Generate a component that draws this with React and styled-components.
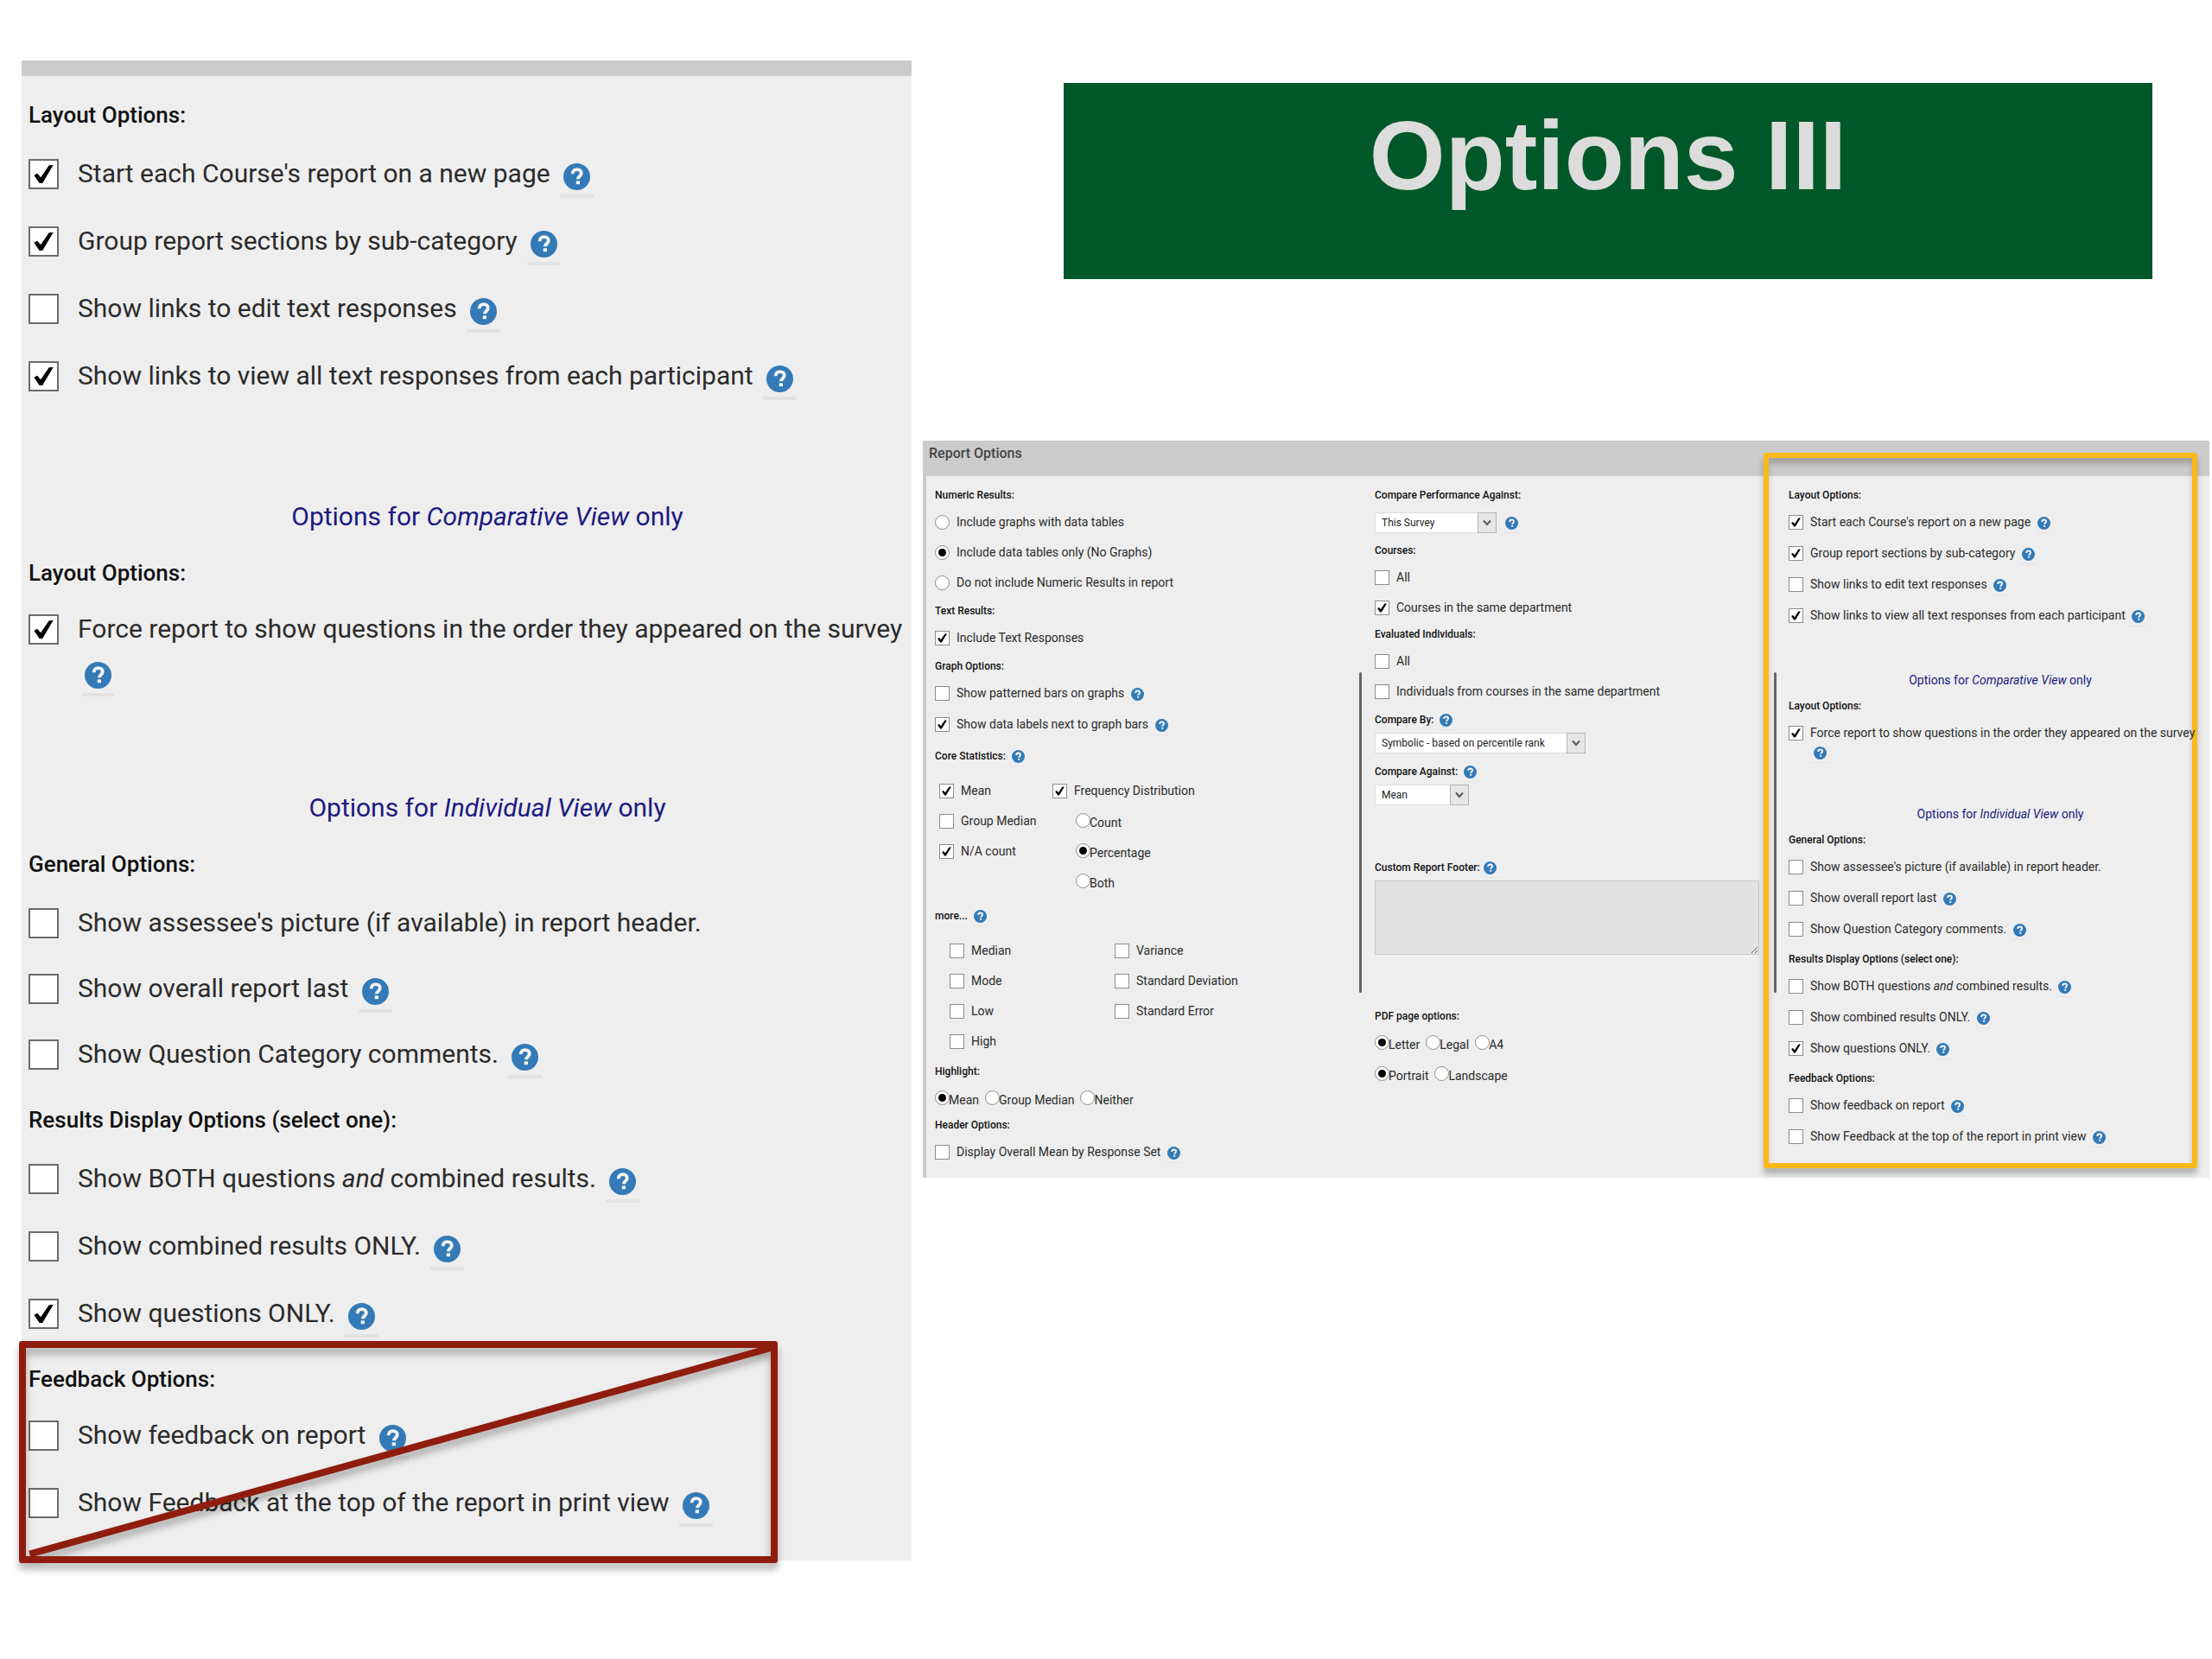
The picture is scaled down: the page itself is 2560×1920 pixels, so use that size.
import React, { useId } from 'react'
import styled, { createGlobalStyle, css, ThemeProvider } from 'styled-components'

const large = {
  font: 30,
  headingFont: 26,
  heading: 36,
  line: 50,
  box: 35,
  boxTop: 8,
  boxBorder: 2,
  boxColor: '#6b6b6b',
  boxGap: 22,
  icon: 31,
  iconPad: 4,
  iconTop: 12,
  iconDrop: 5,
  underline: 4,
  noteIndent: 40,
  headGap: 25,
  headGapTight: 22,
  rowGap: 28,
  rowGapTight: 26,
  sectionGap: 33,
  noteGap: 120,
  noteGapTight: 114,
  noteHeadGap: 29,
}

const small = {
  font: 14,
  headingFont: 12,
  heading: 16,
  line: 22,
  box: 17,
  boxTop: 3,
  boxBorder: 1,
  boxColor: '#8c8c8c',
  boxGap: 8,
  icon: 15,
  iconPad: 2,
  iconTop: 5,
  iconDrop: 3,
  underline: 1,
  noteIndent: 6,
  headGap: 12,
  headGapTight: 12,
  rowGap: 14,
  rowGapTight: 14,
  sectionGap: 16,
  noteGap: 56,
  noteGapTight: 53,
  noteHeadGap: 14,
}

const GlobalStyle = createGlobalStyle`
  *, *::before, *::after {
    box-sizing: border-box;
  }

  body {
    margin: 0;
    background: #fff;
    color: #2b2b2b;
    font-family: Roboto, 'Liberation Sans', sans-serif;
  }

  h1, h2, h3, p {
    margin: 0;
  }
`

const Slide = styled.main`
  display: grid;
  grid-template-columns: 1030fr 1489fr;
  column-gap: 13px;
  align-items: start;
  padding: 70px 3px 70px 25px;
`

const Banner = styled.header`
  margin: 26px 66px 187px 163px;
  height: 227px;
  padding-top: 18px;
  background: #005829;
  text-align: center;
`

const Title = styled.h1`
  color: #dcdcdc;
  font-family: 'Liberation Sans', Arial, sans-serif;
  font-size: 113px;
  font-weight: bold;
  line-height: 132px;
`

const DetailPanel = styled.section`
  padding: 27px 0 42px 8px;
  border-top: 18px solid #cbcbcb;
  background: #eee;
`

const Report = styled.section`
  border-left: 4px solid #cbcbcb;
  background: #eee;
`

const ReportTitle = styled.h2`
  height: 41px;
  padding: 4px 3px;
  background: #cbcbcb;
  color: #444;
  font-size: 16px;
  font-weight: 500;
  line-height: 22px;
`

const ReportBody = styled.div`
  display: grid;
  grid-template-columns: 501fr 3px 477fr 3px 501fr;
`

const Column = styled.div`
  position: relative;
  padding: 14px ${p => p.$right || 0}px 19px ${p => p.$left}px;
`

const Divider = styled.div`
  height: 371px;
  margin-top: 227px;
  border-radius: 2px;
  background: #666;
`

const Highlight = styled.div`
  position: absolute;
  inset: -27px 14px 11px -15px;
  border: 6px solid #fbb81a;
  border-radius: 3px;
  box-shadow: 0 7px 7px rgba(0, 0, 0, 0.25), inset 0 7px 6px rgba(0, 0, 0, 0.2);
  pointer-events: none;
`

const Group = styled.div`
  position: relative;
  margin-top: ${p => p.$mt || 0}px;
`

const Heading = styled.h3`
  display: flex;
  align-items: center;
  height: ${p => p.theme.heading}px;
  margin-bottom: ${p => (p.$gap === undefined ? p.theme.headGap : p.$gap)}px;
  color: #111;
  font-size: ${p => p.theme.headingFont}px;
  font-weight: 500;
  white-space: pre;
`

const Rows = styled.div`
  display: grid;
  row-gap: ${p => p.$gap || p.theme.rowGap}px;
  padding-left: ${p => p.$indent || 0}px;
`

const Row = styled.div`
  display: flex;
  align-items: flex-start;
  gap: ${p => p.theme.boxGap}px;
  min-height: ${p => p.theme.line}px;
`

const RowText = styled.span`
  font-size: ${p => p.theme.font}px;
  line-height: ${p => p.theme.line}px;
`

const control = css`
  flex: none;
  display: grid;
  place-items: center;
  appearance: none;
  width: ${p => p.theme.box}px;
  height: ${p => p.theme.box}px;
  margin: ${p => p.theme.boxTop}px 0 0;
  border: ${p => p.theme.boxBorder}px solid ${p => p.theme.boxColor};
  background: #fff;
`

const Checkbox = styled.input.attrs({ type: 'checkbox' })`
  ${control}

  &:checked::after {
    content: '';
    width: 72%;
    height: 68%;
    background: #000;
    clip-path: polygon(0 56%, 17% 46%, 35% 68%, 78% 2%, 100% 0, 44% 100%, 28% 100%);
  }
`

const Radio = styled.input.attrs({ type: 'radio' })`
  ${control}
  border-radius: 50%;

  &:checked::after {
    content: '';
    width: 9px;
    height: 9px;
    border-radius: 50%;
    background: #000;
  }
`

const HelpButton = styled.button`
  display: inline-flex;
  flex: none;
  vertical-align: middle;
  margin: -10px 0 -10px ${p => p.theme.iconPad}px;
  padding: ${p => p.theme.iconTop}px ${p => p.theme.iconPad}px ${p => p.theme.iconDrop}px;
  border: 0;
  border-bottom: ${p => p.theme.underline}px solid #e3e3e3;
  background: none;

  svg {
    width: ${p => p.theme.icon}px;
    height: ${p => p.theme.icon}px;
  }
`

const Note = styled.p`
  height: ${p => p.theme.heading}px;
  margin-top: ${p => p.$mt}px;
  margin-bottom: ${p => p.theme.noteHeadGap}px;
  padding-left: ${p => p.theme.noteIndent}px;
  color: #1d1a80;
  font-size: ${p => p.theme.font}px;
  line-height: ${p => p.theme.heading}px;
  text-align: center;
`

const Struck = styled.div`
  position: absolute;
  inset: -26px 155px -45px -11px;
  border: 8px solid #8f1d0e;
  border-radius: 3px;
  filter: drop-shadow(0 7px 4px rgba(0, 0, 0, 0.3));
  pointer-events: none;

  svg {
    display: block;
    width: 100%;
    height: 100%;
    overflow: visible;
  }
`

const Pair = styled.div`
  display: grid;
  grid-template-columns: ${p => p.$first}px 1fr;
  align-items: start;
  padding-left: ${p => p.$indent}px;
`

const RadioLine = styled.div`
  display: flex;
  gap: 7px;
`

const RadioLabel = styled.label`
  display: flex;
  align-items: flex-start;
  height: 22px;
  font-size: 14px;
  line-height: 26px;

  input {
    margin-top: 2px;
    margin-right: -1px;
  }
`

const SelectLine = styled.div`
  display: flex;
  align-items: center;
  gap: 6px;
`

const SelectWrap = styled.div`
  position: relative;
  width: ${p => p.$width}px;
`

const SelectBox = styled.select`
  display: block;
  appearance: none;
  width: 100%;
  height: 24px;
  padding: 0 24px 0 7px;
  border: 1px solid #dcdcdc;
  border-radius: 0;
  background: #fff;
  color: #1c1c1c;
  font-family: inherit;
  font-size: 12px;
`

const SelectArrow = styled.span`
  position: absolute;
  top: 0;
  right: 0;
  display: grid;
  place-items: center;
  width: 22px;
  height: 24px;
  border: 1px solid #b4b4b4;
  background: #e6e6e6;
  pointer-events: none;
`

const Footer = styled.textarea`
  display: block;
  width: 100%;
  height: 86px;
  border: 1px solid #c8cbd0;
  background: #e2e2e2;
  resize: vertical;
`

const Help = () => (
  <HelpButton type="button" aria-label="Help">
    <svg viewBox="0 0 32 32" aria-hidden="true">
      <circle cx="16" cy="16" r="16" fill="#337ab7" />
      <path
        d="M11 12.6c0-3.400 2.200-5.200 5.200-5.200 3 0 5.200 1.700 5.200 4.500 0 3.600-3.900 3.600-3.900 7"
        fill="none"
        stroke="#f4f4f4"
        strokeWidth="4"
      />
      <rect x="15.200" y="21" width="4.400" height="4" fill="#f4f4f4" />
    </svg>
  </HelpButton>
)

const Option = ({ children, checked, help, radio }) => {
  const id = useId()
  const Control = radio ? Radio : Checkbox

  return (
    <Row>
      <Control id={id} name={radio} defaultChecked={checked} />
      <RowText>
        <label htmlFor={id}>{children}</label> {help && <Help />}
      </RowText>
    </Row>
  )
}

const InlineRadio = ({ name, checked, children }) => (
  <RadioLabel>
    <Radio name={name} defaultChecked={checked} />
    {children}
  </RadioLabel>
)

const Select = ({ width, label, children }) => (
  <SelectWrap $width={width}>
    <SelectBox aria-label={label}>
      <option>{children}</option>
    </SelectBox>
    <SelectArrow>
      <svg width="10" height="8" viewBox="0 0 10 8" aria-hidden="true">
        <path d="M1 1.500l4 4.500 4-4.500" fill="none" stroke="#555" strokeWidth="2" />
      </svg>
    </SelectArrow>
  </SelectWrap>
)

const LayoutOptions = ({ theme, struck }) => (
  <ThemeProvider theme={theme}>
    <Group>
      <Heading>Layout Options:</Heading>
      <Rows>
        <Option checked help>Start each Course's report on a new page</Option>
        <Option checked help>Group report sections by sub-category</Option>
        <Option help>Show links to edit text responses</Option>
        <Option checked help>
          Show links to view all text responses from each participant
        </Option>
      </Rows>
    </Group>

    <Note $mt={theme.noteGap}>
      Options for <i>Comparative View</i> only
    </Note>
    <Group>
      <Heading $gap={theme.headGapTight}>Layout Options:</Heading>
      <Option checked help>
        Force report to show questions in the order they appeared on the survey
      </Option>
    </Group>

    <Note $mt={theme.noteGapTight}>
      Options for <i>Individual View</i> only
    </Note>
    <Group>
      <Heading>General Options:</Heading>
      <Rows $gap={theme.rowGapTight}>
        <Option>Show assessee's picture (if available) in report header.</Option>
        <Option help>Show overall report last</Option>
        <Option help>Show Question Category comments.</Option>
      </Rows>
    </Group>
    <Group $mt={theme.sectionGap}>
      <Heading>Results Display Options (select one):</Heading>
      <Rows>
        <Option help>
          Show BOTH questions <i>and</i> combined results.
        </Option>
        <Option help>Show combined results ONLY.</Option>
        <Option checked help>Show questions ONLY.</Option>
      </Rows>
    </Group>
    <Group $mt={theme.sectionGap}>
      <Heading $gap={theme.headGapTight}>Feedback Options:</Heading>
      <Rows>
        <Option help>Show feedback on report</Option>
        <Option help>Show Feedback at the top of the report in print view</Option>
      </Rows>
      {struck && (
        <Struck>
          <svg viewBox="0 0 100 100" preserveAspectRatio="none" aria-hidden="true">
            <line
              x1="0.500"
              y1="99"
              x2="100"
              y2="0"
              stroke="#8f1d0e"
              strokeWidth="8"
              vectorEffect="non-scaling-stroke"
            />
          </svg>
        </Struck>
      )}
    </Group>
  </ThemeProvider>
)

const ResultOptions = () => (
  <>
    <Group>
      <Heading>Numeric Results:</Heading>
      <Rows $gap={13}>
        <Option radio="numeric">Include graphs with data tables</Option>
        <Option radio="numeric" checked>Include data tables only (No Graphs)</Option>
        <Option radio="numeric">Do not include Numeric Results in report</Option>
      </Rows>
    </Group>
    <Group $mt={14}>
      <Heading>Text Results:</Heading>
      <Option checked>Include Text Responses</Option>
    </Group>
    <Group $mt={14}>
      <Heading>Graph Options:</Heading>
      <Rows>
        <Option help>Show patterned bars on graphs</Option>
        <Option checked help>Show data labels next to graph bars</Option>
      </Rows>
    </Group>
    <Group $mt={18}>
      <Heading $gap={21}>Core Statistics: <Help /></Heading>
      <Pair $first={131} $indent={5}>
        <Rows $gap={13}>
          <Option checked>Mean</Option>
          <Option>Group Median</Option>
          <Option checked>N/A count</Option>
        </Rows>
        <Rows $gap={13}>
          <Option checked>Frequency Distribution</Option>
          <Rows $gap={13} $indent={27}>
            <InlineRadio name="frequency">Count</InlineRadio>
            <InlineRadio name="frequency" checked>Percentage</InlineRadio>
            <InlineRadio name="frequency">Both</InlineRadio>
          </Rows>
        </Rows>
      </Pair>
    </Group>
    <Group $mt={21}>
      <Heading $gap={21}>more... <Help /></Heading>
      <Pair $first={191} $indent={17}>
        <Rows $gap={13}>
          <Option>Median</Option>
          <Option>Mode</Option>
          <Option>Low</Option>
          <Option>High</Option>
        </Rows>
        <Rows $gap={13}>
          <Option>Variance</Option>
          <Option>Standard Deviation</Option>
          <Option>Standard Error</Option>
        </Rows>
      </Pair>
    </Group>
    <Group $mt={16}>
      <Heading>Highlight:</Heading>
      <RadioLine>
        <InlineRadio name="highlight" checked>Mean</InlineRadio>
        <InlineRadio name="highlight">Group Median</InlineRadio>
        <InlineRadio name="highlight">Neither</InlineRadio>
      </RadioLine>
    </Group>
    <Group $mt={12}>
      <Heading>Header Options:</Heading>
      <Option help>Display Overall Mean by Response Set</Option>
    </Group>
  </>
)

const CompareOptions = () => (
  <>
    <Group>
      <Heading>Compare Performance Against:</Heading>
      <SelectLine>
        <Select width={141} label="Compare Performance Against">This Survey</Select>
        <Help />
      </SelectLine>
    </Group>
    <Group $mt={12}>
      <Heading>Courses:</Heading>
      <Rows $gap={13}>
        <Option>All</Option>
        <Option checked>Courses in the same department</Option>
      </Rows>
    </Group>
    <Group $mt={12}>
      <Heading>Evaluated Individuals:</Heading>
      <Rows $gap={13}>
        <Option>All</Option>
        <Option>Individuals from courses in the same department</Option>
      </Rows>
    </Group>
    <Group $mt={14}>
      <Heading $gap={7}>Compare By: <Help /></Heading>
      <Select width={244} label="Compare By">Symbolic - based on percentile rank</Select>
    </Group>
    <Group $mt={13}>
      <Heading $gap={7}>Compare Against: <Help /></Heading>
      <Select width={109} label="Compare Against">Mean</Select>
    </Group>
    <Group $mt={64}>
      <Heading $gap={7}>
        <label htmlFor="report-footer">Custom Report Footer:</label> <Help />
      </Heading>
      <Footer id="report-footer" />
    </Group>
    <Group $mt={63}>
      <Heading>PDF page options:</Heading>
      <Rows>
        <RadioLine>
          <InlineRadio name="paper" checked>Letter</InlineRadio>
          <InlineRadio name="paper">Legal</InlineRadio>
          <InlineRadio name="paper">A4</InlineRadio>
        </RadioLine>
        <RadioLine>
          <InlineRadio name="orientation" checked>Portrait</InlineRadio>
          <InlineRadio name="orientation">Landscape</InlineRadio>
        </RadioLine>
      </Rows>
    </Group>
  </>
)

const App = () => (
  <>
    <GlobalStyle />
    <Slide>
      <DetailPanel>
        <LayoutOptions theme={large} struck />
      </DetailPanel>
      <div>
        <Banner>
          <Title>Options III</Title>
        </Banner>
        <ThemeProvider theme={small}>
          <Report>
            <ReportTitle>Report Options</ReportTitle>
            <ReportBody>
              <Column $left={10}>
                <ResultOptions />
              </Column>
              <Divider />
              <Column $left={15} $right={17}>
                <CompareOptions />
              </Column>
              <Divider />
              <Column $left={14} $right={3}>
                <Highlight />
                <LayoutOptions theme={small} />
              </Column>
            </ReportBody>
          </Report>
        </ThemeProvider>
      </div>
    </Slide>
  </>
)

export default App
